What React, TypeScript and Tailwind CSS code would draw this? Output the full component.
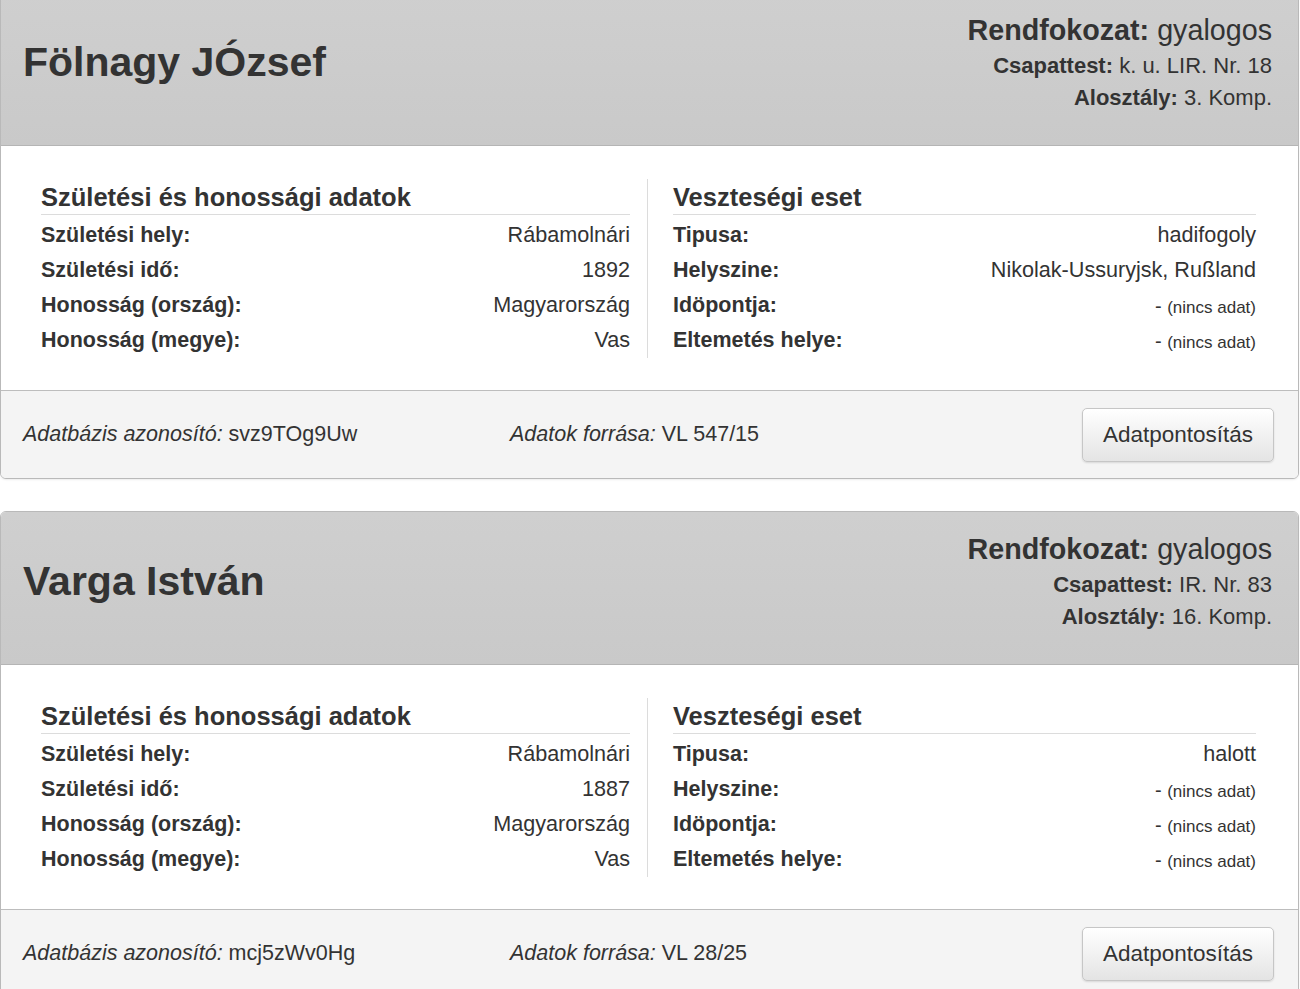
import React from 'react'

type Row = { label: string; value: string; empty?: boolean }

type Soldier = {
  name: string
  rank: string
  unit: string
  company: string
  birth: Row[]
  loss: Row[]
  id: string
  source: string
}

const SOLDIERS: Soldier[] = [
  {
    name: 'Fölnagy JÓzsef',
    rank: 'gyalogos',
    unit: 'k. u. LIR. Nr. 18',
    company: '3. Komp.',
    birth: [
      { label: 'Születési hely:', value: 'Rábamolnári' },
      { label: 'Születési idő:', value: '1892' },
      { label: 'Honosság (ország):', value: 'Magyarország' },
      { label: 'Honosság (megye):', value: 'Vas' },
    ],
    loss: [
      { label: 'Tipusa:', value: 'hadifogoly' },
      { label: 'Helyszine:', value: 'Nikolak-Ussuryjsk, Rußland' },
      { label: 'Idöpontja:', value: '', empty: true },
      { label: 'Eltemetés helye:', value: '', empty: true },
    ],
    id: 'svz9TOg9Uw',
    source: 'VL 547/15',
  },
  {
    name: 'Varga István',
    rank: 'gyalogos',
    unit: 'IR. Nr. 83',
    company: '16. Komp.',
    birth: [
      { label: 'Születési hely:', value: 'Rábamolnári' },
      { label: 'Születési idő:', value: '1887' },
      { label: 'Honosság (ország):', value: 'Magyarország' },
      { label: 'Honosság (megye):', value: 'Vas' },
    ],
    loss: [
      { label: 'Tipusa:', value: 'halott' },
      { label: 'Helyszine:', value: '', empty: true },
      { label: 'Idöpontja:', value: '', empty: true },
      { label: 'Eltemetés helye:', value: '', empty: true },
    ],
    id: 'mcj5zWv0Hg',
    source: 'VL 28/25',
  },
]

function DataRow({ row }: { row: Row }) {
  return (
    <div className="flex h-[35px] items-center justify-between">
      <span className="text-[21.5px] font-bold">{row.label}</span>
      {row.empty ? (
        <span className="text-[20px]">
          - <span className="text-[17px]">(nincs adat)</span>
        </span>
      ) : (
        <span className="text-[21.6px]">{row.value}</span>
      )}
    </div>
  )
}

function Section({ title, rows }: { title: string; rows: Row[] }) {
  return (
    <div>
      <h3 className="mb-[3px] h-[36px] border-b border-[#dcdcdc] text-[25.5px] leading-[36px] font-bold">{title}</h3>
      {rows.map((r) => (
        <DataRow key={r.label} row={r} />
      ))}
    </div>
  )
}

function SoldierCard({ s, first }: { s: Soldier; first?: boolean }) {
  return (
    <div
      className={`overflow-hidden rounded-[6px] border border-[#b9b9b9] bg-white shadow-[0_1px_2px_rgba(0,0,0,0.08)] ${
        first ? '-mt-[8px]' : 'mt-[32px]'
      }`}
    >
      {/* Header */}
      <div className="flex h-[153px] items-start justify-between border-b border-[#b5b5b5] bg-gradient-to-b from-[#cfcfcf] to-[#c9c9c9] pr-[26px] pl-[22px]">
        <h2 className="pt-[45px] text-[41px] leading-[48px] font-bold">{s.name}</h2>
        <div className="flex flex-col items-end pt-[20px]">
          <div className="text-[28.7px] leading-[35px]">
            <b>Rendfokozat:</b> {s.rank}
          </div>
          <div className="text-[22px] leading-[35px]">
            <b>Csapattest:</b> {s.unit}
          </div>
          <div className="text-[22px] leading-[30px]">
            <b>Alosztály:</b> {s.company}
          </div>
        </div>
      </div>

      {/* Body */}
      <div className="grid grid-cols-[647px_1fr] pt-[33px] pb-[32px]">
        <div className="border-r border-[#dcdcdc] pr-[17px] pl-[40px]">
          <Section title="Születési és honossági adatok" rows={s.birth} />
        </div>
        <div className="pr-[42px] pl-[25px]">
          <Section title="Veszteségi eset" rows={s.loss} />
        </div>
      </div>

      {/* Footer */}
      <div className="flex h-[88px] items-center border-t border-[#bdbdbd] bg-[#f4f4f4] pr-[24px] pl-[22px] text-[21.5px]">
        <div className="w-[487px]">
          <i>Adatbázis azonosító:</i> {s.id}
        </div>
        <div className="flex-1">
          <i>Adatok forrása:</i> {s.source}
        </div>
        <button className="h-[54px] w-[192px] rounded-[5px] border border-[#c6c6c6] bg-gradient-to-b from-[#ffffff] to-[#e4e4e4] text-[22.5px] text-[#333] shadow-[0_1px_2px_rgba(0,0,0,0.12)]">
          Adatpontosítás
        </button>
      </div>
    </div>
  )
}

export default function App() {
  return (
    <div className="h-[989px] w-[1300px] overflow-hidden bg-white pr-[1px] font-['Liberation_Sans',Arial,sans-serif] text-[#333]">
      {SOLDIERS.map((s, i) => (
        <SoldierCard key={s.id} s={s} first={i === 0} />
      ))}
    </div>
  )
}
